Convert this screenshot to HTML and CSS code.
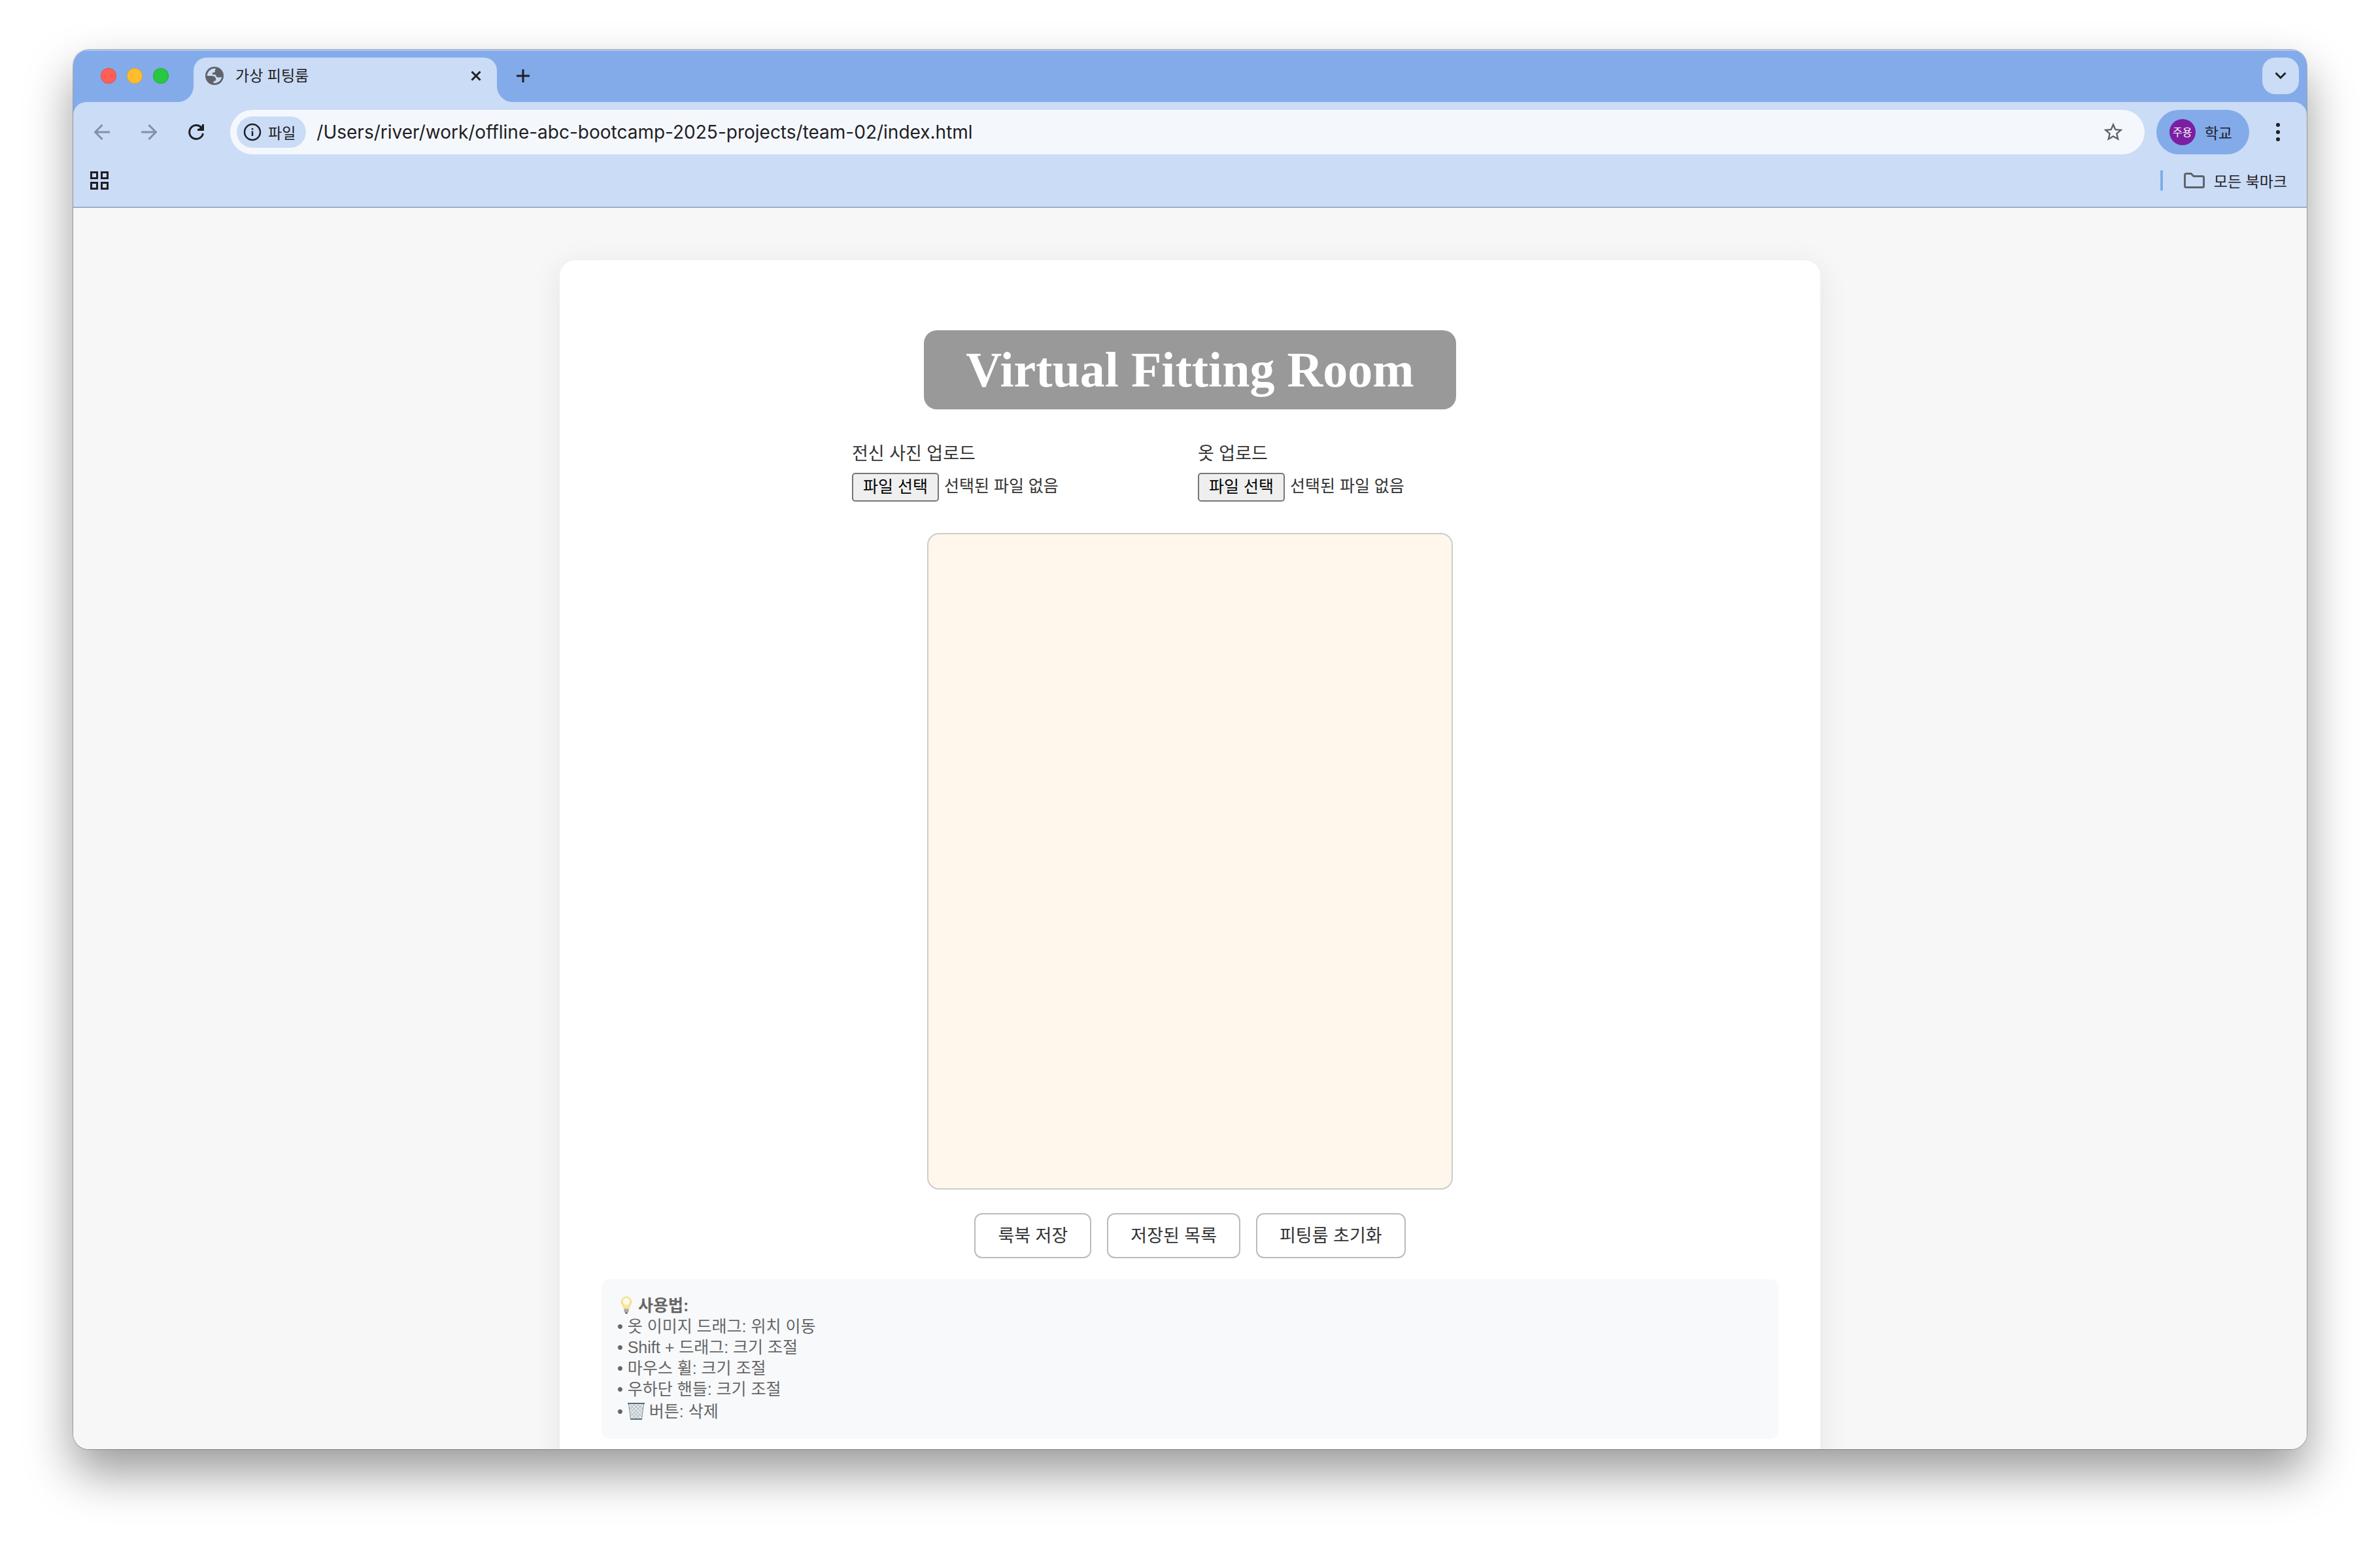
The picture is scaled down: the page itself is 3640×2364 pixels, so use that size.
FILE: index.html
```html
<!DOCTYPE html>
<html lang="ko">
<head>
<meta charset="utf-8">
<title>가상 피팅룸</title>
<link rel="stylesheet" href="styles.css">
</head>
<body>
<div class="window">
  <header class="chrome">
    <div class="tabstrip">
      <div class="lights">
        <button class="light light-close" type="button" aria-label="닫기"></button>
        <button class="light light-min" type="button" aria-label="최소화"></button>
        <button class="light light-max" type="button" aria-label="최대화"></button>
      </div>
      <div class="tab">
        <svg class="flare flare-left" viewBox="0 0 24 24" aria-hidden="true"><path d="M24 0v24H0C13 24 24 13 24 0z"/></svg>
        <svg class="globe" viewBox="2 2 20 20" aria-hidden="true"><circle cx="12" cy="12" r="10" fill="#5f6368"/><path fill="#cbdcf6" d="M4 11.500A8 8 0 0 1 13.800 4.200L12.600 5.500V7.500L11.500 8.500H9.800V10.500H13L14.500 13.200C16 14.200 18 13.600 19.900 13A8 8 0 0 1 11 19.950V18L13.600 17C14 14 12.500 12.200 9.500 12H4z"/></svg>
        <span class="tab-title">가상 피팅룸</span>
        <button class="icon-button tab-close" type="button" aria-label="탭 닫기"><svg width="16" height="16" viewBox="0 0 16 16"><path class="line" d="M1.500 1.500l13 13M14.500 1.500l-13 13"/></svg></button>
        <svg class="flare flare-right" viewBox="0 0 24 24" aria-hidden="true"><path d="M0 0v24h24C11 24 0 13 0 0z"/></svg>
      </div>
      <button class="icon-button new-tab" type="button" aria-label="새 탭"><svg width="20" height="20" viewBox="0 0 20 20"><path class="line" d="M10 0v20M0 10h20"/></svg></button>
      <button class="tab-search" type="button" aria-label="탭 검색"><svg width="18" height="12" viewBox="0 0 18 12"><path class="line" d="M1.500 1.500L9 9l7.500-7.500"/></svg></button>
    </div>
    <div class="toolbar">
      <nav class="nav">
        <button class="icon-button nav-off" type="button" aria-label="뒤로"><svg width="24" height="24" viewBox="0 0 24 24"><path class="line" d="M24 12H2M12.500 1L1.500 12l11 11"/></svg></button>
        <button class="icon-button nav-off" type="button" aria-label="앞으로"><svg width="24" height="24" viewBox="0 0 24 24"><path class="line" d="M0 12h22M11.500 1l11 11-11 11"/></svg></button>
        <button class="icon-button" type="button" aria-label="새로고침"><svg width="26" height="26" viewBox="0 0 26 26"><path class="line" d="M23.500 15A10.500 10.500 0 1 1 21 6"/><path fill="currentColor" d="M22 1h3v10H15V8h7z"/><path fill="currentColor" d="M16 9l7-7v7z"/></svg></button>
      </nav>
      <div class="omnibox">
        <button class="site-chip" type="button"><svg width="28" height="28" viewBox="0 0 28 28" aria-hidden="true"><circle class="line medium" cx="14" cy="14" r="12"/><path class="line medium" d="M14 12.500V20M14 8v2.500"/></svg>파일</button>
        <input class="url" type="text" aria-label="주소창" value="/Users/river/work/offline-abc-bootcamp-2025-projects/team-02/index.html">
        <button class="icon-button star" type="button" aria-label="북마크 추가"><svg width="32" height="32" viewBox="1 1 22 22"><path fill="currentColor" d="M22 9.240l-7.190-.620L12 2 9.190 8.630 2 9.240l5.460 4.730L5.820 21 12 17.270 18.180 21l-1.630-7.030L22 9.240zM12 15.400l-3.760 2.270 1-4.280-3.320-2.880 4.380-.380L12 6.100l1.710 4.040 4.380.380-3.320 2.880 1 4.280L12 15.400z"/></svg></button>
      </div>
      <button class="profile" type="button"><span class="avatar">주용</span>학교</button>
      <button class="icon-button more" type="button" aria-label="메뉴"><svg width="6" height="28" viewBox="0 0 6 28"><g fill="currentColor"><circle cx="3" cy="3" r="3"/><circle cx="3" cy="14" r="3"/><circle cx="3" cy="25" r="3"/></g></svg></button>
    </div>
    <div class="bookmarks">
      <button class="icon-button" type="button" aria-label="앱"><svg width="28" height="28" viewBox="0 0 28 28"><path class="line" d="M1.500 1.500h9v9h-9zM17.500 1.500h9v9h-9zM1.500 17.500h9v9h-9zM17.500 17.500h9v9h-9z"/></svg></button>
      <span class="divider"></span>
      <button class="all-bookmarks" type="button"><svg width="32" height="24" viewBox="0 0 32 24" aria-hidden="true"><path d="M3.500 1.500h7.500l4 4h13.500a2 2 0 0 1 2 2v13a2 2 0 0 1-2 2h-25a2 2 0 0 1-2-2v-17a2 2 0 0 1 2-2z"/></svg>모든 북마크</button>
    </div>
  </header>
  <main class="viewport">
    <section class="card">
      <h1 class="title">Virtual Fitting Room</h1>
      <div class="uploads">
        <div class="upload">
          <label for="body-photo">전신 사진 업로드</label>
          <div class="picker">
            <input id="body-photo" type="file" accept="image/*">
            <button type="button" tabindex="-1">파일 선택</button>
            <span>선택된 파일 없음</span>
          </div>
        </div>
        <div class="upload">
          <label for="clothes-photo">옷 업로드</label>
          <div class="picker">
            <input id="clothes-photo" type="file" accept="image/*">
            <button type="button" tabindex="-1">파일 선택</button>
            <span>선택된 파일 없음</span>
          </div>
        </div>
      </div>
      <div class="stage"></div>
      <div class="actions">
        <button type="button">룩북 저장</button>
        <button type="button">저장된 목록</button>
        <button type="button">피팅룸 초기화</button>
      </div>
      <div class="tips">
        <p class="tips-title"><svg class="bulb" viewBox="0 0 32 28" aria-hidden="true"><path fill="#fbe59a" stroke="#efd27a" d="M14 1c-4.500 0-7.500 3.400-7.500 7.500 0 4.500 3.500 6.500 4 11h7c.500-4.500 4-6.500 4-11C21.500 4.400 18.500 1 14 1z"/><ellipse cx="14" cy="8" rx="5" ry="5.500" fill="#fffbe6"/><path fill="#a9a9a4" d="M10.500 19.500h7v4l-2 2.500h-3l-2-2.500z"/><path fill="#55554f" d="M12 25h4l-1 2h-2z"/></svg><strong>사용법:</strong></p>
        <p>• 옷 이미지 드래그: 위치 이동</p>
        <p>• Shift + 드래그: 크기 조절</p>
        <p>• 마우스 휠: 크기 조절</p>
        <p>• 우하단 핸들: 크기 조절</p>
        <p class="tips-delete">• <svg class="trash" viewBox="0 0 26 28" aria-hidden="true"><path fill="#e3e8eb" stroke="#7e8b93" d="M1.500 2.500h23L21.500 26.500h-17z"/><path fill="none" stroke="#a6b3bb" d="M3 8l17 18M4 15l10 11M4 4l18 19M10 4l13 13M16 4l7 7M23 8L6 26M22 15L12 26M22 4L4 22M16 4L3 17M10 4l-7 7"/><path fill="#566b7a" d="M0 1h26v2H0zM4 25h18v2H4z"/></svg> 버튼: 삭제</p>
      </div>
    </section>
  </main>
</div>
</body>
</html>
```
FILE: styles.css
```css
* {
  box-sizing: border-box;
}

body {
  margin: 0;
  height: 100vh;
  padding: 76px 112px 148px;
  background: #fff;
  color: #333;
  font-family: "Liberation Sans", "Noto Sans CJK KR", sans-serif;
}

button,
input {
  font: inherit;
  color: inherit;
}

button {
  padding: 0;
  border: 0;
  background: none;
}

p,
h1 {
  margin: 0;
}

svg {
  display: block;
}

.line {
  fill: none;
  stroke: currentColor;
  stroke-width: 3;
}

.medium {
  stroke-width: 2.5;
}

.window {
  display: flex;
  flex-direction: column;
  height: 100%;
  overflow: hidden;
  border-radius: 24px;
  box-shadow: 0 0 0 1px rgba(0, 0, 0, 0.25), 0 36px 72px rgba(0, 0, 0, 0.4);
}

/* Browser chrome */

.chrome {
  background: #83abea;
  border-bottom: 2px solid #a1aecb;
  box-shadow: inset 0 2px #a6c4f2;
  color: #1f2023;
  font-family: Inter, "Noto Sans CJK KR", sans-serif;
  font-size: 23px;
}

.tabstrip {
  display: flex;
  align-items: center;
  height: 80px;
  padding: 0 12px 0 42px;
}

.lights {
  display: flex;
  gap: 16px;
  margin-right: 38px;
}

.light {
  width: 24px;
  height: 24px;
  border: 1px solid rgba(0, 0, 0, 0.12);
  border-radius: 50%;
}

.light-close {
  background: #ff5f57;
}

.light-min {
  background: #febc2e;
}

.light-max {
  background: #28c840;
}

.tab {
  position: relative;
  display: flex;
  align-items: center;
  align-self: flex-end;
  width: 464px;
  height: 68px;
  padding: 0 20px 12px 18px;
  border-radius: 20px 20px 0 0;
  background: #cbdcf6;
}

.flare {
  position: absolute;
  bottom: 0;
  width: 24px;
  height: 24px;
  fill: #cbdcf6;
}

.flare-left {
  right: 100%;
}

.flare-right {
  left: 100%;
}

.globe {
  width: 28px;
  height: 28px;
  margin-right: 18px;
}

.tab-title {
  flex: 1;
  line-height: 32px;
}

.icon-button {
  display: flex;
  align-items: center;
  justify-content: center;
  width: 40px;
  height: 40px;
}

.tab-close {
  width: 24px;
}

.new-tab {
  margin-left: 20px;
}

.tab-search {
  display: flex;
  align-items: center;
  justify-content: center;
  width: 56px;
  height: 56px;
  margin-left: auto;
  border-radius: 20px;
  background: #cbdcf6;
}

.toolbar {
  display: flex;
  align-items: center;
  height: 92px;
  padding: 0 24px;
  border-radius: 20px 20px 0 0;
  background: #cbdcf6;
}

.nav {
  display: flex;
  gap: 32px;
  margin-right: 32px;
}

.nav-off {
  color: #848fa3;
}

.omnibox {
  display: flex;
  flex: 1;
  align-items: center;
  height: 68px;
  padding: 0 28px 0 10px;
  border-radius: 34px;
  background: #f4f8fd;
}

.site-chip {
  display: flex;
  align-items: center;
  gap: 10px;
  height: 48px;
  margin-right: 16px;
  padding: 0 16px 0 10px;
  border-radius: 24px;
  background: #cbdcf6;
}

.url {
  flex: 1;
  padding: 0;
  border: 0;
  outline: 0;
  background: none;
  font-size: 28px;
}

.star {
  color: #5f6368;
}

.profile {
  display: flex;
  align-items: center;
  gap: 14px;
  height: 68px;
  margin: 0 24px 0 18px;
  padding: 0 26px 0 20px;
  border-radius: 34px;
  background: #83abea;
}

.avatar {
  width: 40px;
  height: 40px;
  border-radius: 50%;
  background: #7b1fa2;
  color: #fff;
  font-size: 16px;
  line-height: 40px;
  text-align: center;
}

.bookmarks {
  display: flex;
  align-items: center;
  height: 68px;
  padding: 0 30px 12px 20px;
  background: #cbdcf6;
}

.divider {
  width: 4px;
  height: 32px;
  margin: 0 32px 0 auto;
  border-radius: 2px;
  background: #83abea;
}

.all-bookmarks {
  display: flex;
  align-items: center;
  gap: 14px;
}

.all-bookmarks path {
  fill: none;
  stroke: #5f6368;
  stroke-width: 3;
}

/* Fitting room page */

.viewport {
  flex: 1;
  min-height: 0;
  overflow: hidden;
  padding: 80px 40px;
  background: #f7f7f7;
}

.card {
  display: flex;
  flex-direction: column;
  align-items: center;
  max-width: 1928px;
  margin: 0 auto;
  padding: 107px 64px 64px;
  border-radius: 24px;
  background: #fff;
  box-shadow: 0 8px 48px rgba(0, 0, 0, 0.08);
}

.title {
  padding: 20px 64px;
  border-radius: 20px;
  background: #999;
  color: #fff;
  font-family: "Liberation Serif", serif;
  font-size: 76px;
  line-height: 81px;
}

.uploads {
  display: flex;
  gap: 24px;
  margin: 48px 0;
}

.upload {
  width: 505px;
}

.upload label {
  display: block;
  margin-bottom: 9px;
  font-size: 27px;
  line-height: 40px;
}

.picker {
  position: relative;
  display: flex;
  gap: 8px;
  font-size: 25px;
  line-height: 40px;
}

.picker input {
  position: absolute;
  inset: 0;
  width: 100%;
  opacity: 0;
}

.picker button {
  padding: 0 15px 2px;
  border: 2px solid #767676;
  border-radius: 5px;
  background: #efefef;
  color: #000;
  line-height: 38px;
}

.stage {
  width: 804px;
  max-width: 100%;
  height: 1004px;
  border: 2px solid #ccc;
  border-radius: 18px;
  background: #fff7eb;
}

.actions {
  display: flex;
  gap: 24px;
  margin: 36px 0 32px;
}

.actions button {
  height: 69px;
  padding: 0 34px 4px;
  border: 2px solid #bbb;
  border-radius: 12px;
  background: #fff;
  font-size: 27px;
}

.tips {
  align-self: stretch;
  padding: 24px;
  border-radius: 12px;
  background: #f8f9fb;
  color: #666;
  font-size: 25px;
  line-height: 32px;
}

.tips-title {
  display: flex;
  align-items: center;
}

.tips-delete {
  display: flex;
  align-items: center;
  gap: 7px;
  line-height: 36px;
}

.bulb {
  width: 32px;
  height: 28px;
}

.trash {
  width: 26px;
  height: 28px;
}
```
